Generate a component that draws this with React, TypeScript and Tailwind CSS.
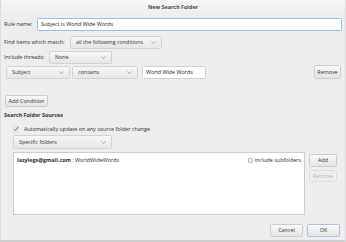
import React from "react";

const Chevron = () => (
  <svg width="5" height="3" viewBox="0 0 5 3" className="shrink-0">
    <path d="M0.5 0.5 L2.5 2.5 L4.5 0.5" fill="none" stroke="#888" strokeWidth="0.7" />
  </svg>
);

const Select = ({ label, w, className = "" }: { label: string; w: string; className?: string }) => (
  <div
    className={`${w} ${className} h-[13px] flex items-center justify-between pl-[5px] pr-[5px] rounded-[1.5px] border border-[#d2d2d2] bg-gradient-to-b from-[#f6f6f6] to-[#e6e6e6] text-[#333]`}
  >
    <span>{label}</span>
    <Chevron />
  </div>
);

const Button = ({ label, w, className = "", disabled = false, def = false }: { label: string; w: string; className?: string; disabled?: boolean; def?: boolean }) => (
  <div
    className={`${w} ${className} h-[12px] flex items-center justify-center rounded-[1.5px] border ${
      def ? "border-[#a9c2df]" : disabled ? "border-[#dcdcdc]" : "border-[#cbcbcb]"
    } ${disabled ? "bg-[#ededed] text-[#b5b5b5]" : "bg-gradient-to-b from-[#f8f8f8] to-[#e4e4e4] text-[#333]"}`}
  >
    {label}
  </div>
);

export default function App() {
  return (
    <div
      className="w-[346px] h-[242px] bg-[#ededed] text-[5.4px] text-[#2e2e2e] flex flex-col border-b-2 border-b-[#cfcfcf] border-l border-l-[#dcdcdc] border-r border-r-[#dcdcdc] overflow-hidden"
      style={{ fontFamily: '"Open Sans", "DejaVu Sans", sans-serif' }}
    >
      {/* title bar */}
      <div className="h-[14px] shrink-0 flex items-center justify-center bg-gradient-to-b from-[#f7f7f7] to-[#ededed] font-bold text-[#4a4a4a]">
        New Search Folder
      </div>

      {/* rule name */}
      <div className="mt-[4px] h-[13px] flex items-center pl-[3px] pr-[3px]">
        <span className="w-[33px]">Rule name:</span>
        <div className="flex-1 h-[13px] flex items-center pl-[3px] bg-white border border-[#9fbfe2] rounded-[1.5px] text-[#222]">
          Subject is World Wide Words
        </div>
      </div>

      {/* match */}
      <div className="mt-[5px] h-[13px] flex items-center pl-[3px]">
        <span className="w-[66px]">Find items which match:</span>
        <Select label="all the following conditions" w="w-[92px]" />
      </div>

      {/* threads */}
      <div className="mt-[2px] h-[13px] flex items-center pl-[3px]">
        <span className="w-[45px]">Include threads:</span>
        <Select label="None" w="w-[63px]" />
      </div>

      {/* condition row */}
      <div className="mt-[1px] h-[14px] flex items-center pl-[5px] pr-[4px]">
        <Select label="Subject" w="w-[64px]" />
        <Select label="contains" w="w-[66px]" className="ml-[2px]" />
        <div className="ml-[4px] w-[64px] h-[13px] flex items-center pl-[3px] bg-white border border-[#d0d0d0] rounded-[1.5px] text-[#222]">
          World Wide Words
        </div>
        <div className="flex-1" />
        <Button label="Remove" w="w-[27px]" className="h-[14px]" />
      </div>

      {/* add condition */}
      <div className="mt-[16px] pl-[4px]">
        <Button label="Add Condition" w="w-[43px]" />
      </div>

      <div className="mt-[4px] pl-[3px] font-bold text-[#333] h-[8px] flex items-center">Search Folder Sources</div>

      {/* checkbox */}
      <div className="mt-[6px] h-[8px] flex items-center pl-[12px]">
        <svg width="6" height="6" viewBox="0 0 6 6" className="mr-[5px]">
          <rect x="0.3" y="0.3" width="5.4" height="5.4" rx="1" fill="#f4f4f4" stroke="#b8b8b8" strokeWidth="0.5" />
          <path d="M1.2 3 L2.5 4.4 L5 1" fill="none" stroke="#3d6cb0" strokeWidth="1" />
        </svg>
        <span>Automatically update on any source folder change</span>
      </div>

      {/* specific folders */}
      <div className="mt-[2px] pl-[12px]">
        <Select label="Specific folders" w="w-[99px]" className="h-[14px]" />
      </div>

      {/* list + buttons */}
      <div className="mt-[3px] flex pl-[12px] pr-[8px]">
        <div className="w-[293px] h-[63px] bg-white border border-[#cdcdcd] flex items-start justify-between px-[3px] pt-[3px]">
          <span>
            <span className="font-bold">lazylegs@gmail.com</span> : WorldWideWords
          </span>
          <span className="flex items-center">
            <span className="w-[5px] h-[5px] border border-[#b5b5b5] rounded-[1px] bg-[#f4f4f4] mr-[2px]" />
            include subfolders
          </span>
        </div>
        <div className="ml-[4px] flex flex-col pt-[2px] gap-[3px]">
          <Button label="Add" w="w-[28px]" className="h-[13px]" />
          <Button label="Remove" w="w-[28px]" disabled />
        </div>
      </div>

      {/* bottom buttons */}
      <div className="mt-[9px] flex justify-end pr-[5px] gap-[4px]">
        <Button label="Cancel" w="w-[33px]" className="h-[13px]" />
        <Button label="OK" w="w-[33px]" className="h-[13px]" def />
      </div>
    </div>
  );
}
